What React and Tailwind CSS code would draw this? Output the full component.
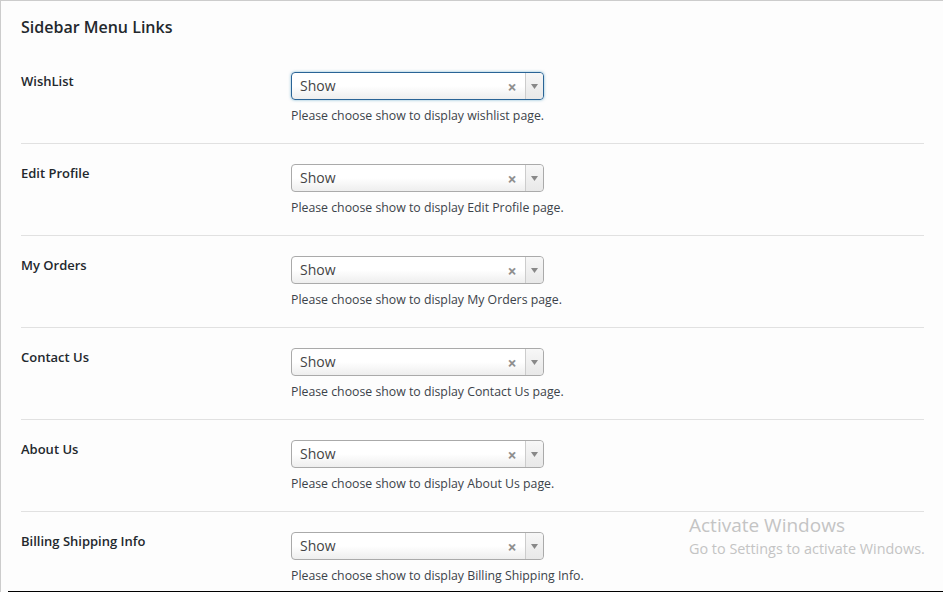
import React from "react";

const rows = [
  { label: "WishList", desc: "Please choose show to display wishlist page.", focused: true },
  { label: "Edit Profile", desc: "Please choose show to display Edit Profile page." },
  { label: "My Orders", desc: "Please choose show to display My Orders page." },
  { label: "Contact Us", desc: "Please choose show to display Contact Us page." },
  { label: "About Us", desc: "Please choose show to display About Us page." },
  { label: "Billing Shipping Info", desc: "Please choose show to display Billing Shipping Info." },
];

function SelectBox({ focused }) {
  return (
    <div
      className={`flex h-[28px] w-[253px] items-stretch rounded-[4px] border bg-gradient-to-b from-white from-50% to-[#eeeeee] ${
        focused ? "border-[#2a6496] shadow-[0_0_3px_rgba(0,115,170,0.5)]" : "border-[#aaaaaa]"
      }`}
    >
      <span className="flex-1 pl-[8px] pt-[4px] text-[14px] leading-[18px] text-[#444]">Show</span>
      <span className="flex w-[26px] items-center justify-center pt-[1px] text-[16px] font-bold text-[#8f8f8f]">×</span>
      <span className="flex w-[18px] items-center justify-center rounded-r-[4px] border-l border-[#cccccc] bg-gradient-to-b from-[#f7f7f7] to-[#e8e8e8]">
        <svg width="7" height="5" viewBox="0 0 7 5">
          <path d="M0 0h7L3.5 5z" fill="#888" />
        </svg>
      </span>
    </div>
  );
}

export default function App() {
  return (
    <div
      className="relative flex h-[592px] w-[943px] flex-col overflow-hidden border-l border-t border-[#cccccc] bg-[#fdfdfd] text-[#3c434a]"
      style={{ fontFamily: '"Open Sans", "Noto Sans", sans-serif' }}
    >
      <div className="flex-1 pl-[20px] pr-[19px]">
        {/* Header */}
        <h2 className="pt-[15px] text-[16px] font-semibold leading-[22px] text-[#23282d]">Sidebar Menu Links</h2>

        <div className="mt-[22px]">
          {rows.map((row, i) => {
            const last = i === rows.length - 1;
            const first = i === 0;
            return (
              <div
                key={row.label}
                className={`flex ${first ? "h-[84px] pt-[12px]" : last ? "pt-[20px]" : "h-[92px] pt-[20px]"} ${
                  last ? "" : "border-b border-[#e1e1e1]"
                }`}
              >
                <div className="w-[270px] text-[13px] font-semibold leading-[18px] text-[#23282d]">{row.label}</div>
                <div>
                  <SelectBox focused={row.focused} />
                  <p className="mt-[7px] text-[12.3px] leading-[18px] text-[#3c434a]">{row.desc}</p>
                </div>
              </div>
            );
          })}
        </div>
      </div>
      <div className="ml-[7px] h-px bg-black" />

      {/* watermark */}
      <div className="pointer-events-none absolute left-[688px] top-[511px] text-[#c4c4c4]">
        <div className="text-[19px] leading-[27px]">Activate Windows</div>
        <div className="text-[14.4px] leading-[20px]">Go to Settings to activate Windows.</div>
      </div>
    </div>
  );
}
